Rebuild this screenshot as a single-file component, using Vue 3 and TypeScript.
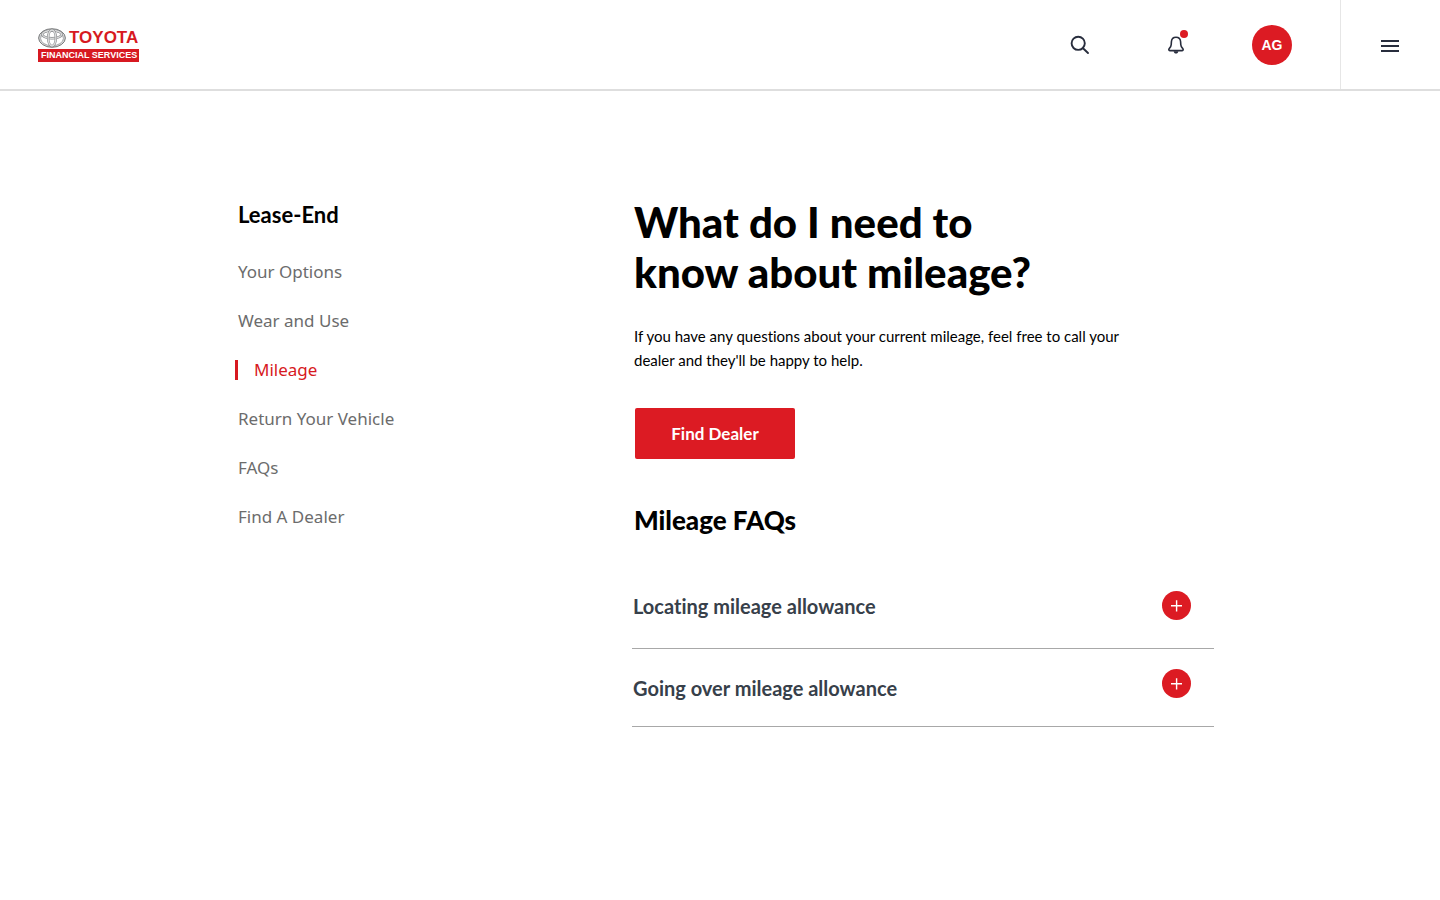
<script setup lang="ts">
interface NavItem {
  label: string
  active?: boolean
}

const navItems: NavItem[] = [
  { label: 'Your Options' },
  { label: 'Wear and Use' },
  { label: 'Mileage', active: true },
  { label: 'Return Your Vehicle' },
  { label: 'FAQs' },
  { label: 'Find A Dealer' },
]

const faqs: string[] = ['Locating mileage allowance', 'Going over mileage allowance']
</script>

<template>
  <div class="page">
    <header class="topbar">
      <a class="logo" href="#">
        <span class="logo-top">
          <svg class="emblem" viewBox="0 0 28 20" aria-hidden="true">
            <g fill="none">
              <ellipse cx="14" cy="10" rx="13.4" ry="9.3" fill="#d2d3d4" stroke="#6d6f71" stroke-width="0.9" />
              <ellipse cx="14" cy="10.3" rx="11.4" ry="7.4" fill="#fff" stroke="#8b8d8f" stroke-width="0.7" />
              <ellipse cx="14" cy="6.4" rx="9.6" ry="3.9" stroke="#85878a" stroke-width="2.4" />
              <ellipse cx="14" cy="6.4" rx="9.6" ry="3.9" stroke="#dcdddd" stroke-width="1.3" />
              <ellipse cx="14" cy="10" rx="3.9" ry="8" stroke="#85878a" stroke-width="2.4" />
              <ellipse cx="14" cy="10" rx="3.9" ry="8" stroke="#dcdddd" stroke-width="1.3" />
            </g>
          </svg>
          <span class="logo-name">TOYOTA</span>
        </span>
        <span class="logo-band">FINANCIAL SERVICES</span>
      </a>

      <div class="actions">
        <button class="cell" type="button" aria-label="Search">
          <svg width="20" height="20" viewBox="0 0 20 20" fill="none" stroke="#282d3d" stroke-width="1.9" stroke-linecap="round">
            <circle cx="8.2" cy="8.3" r="6.6" />
            <path d="M13 13.2 18 18" />
          </svg>
        </button>
        <button class="cell" type="button" aria-label="Notifications">
          <span class="bell">
            <svg width="18" height="18" viewBox="0 0 18 18" fill="none" stroke="#282d3d" stroke-width="1.6" stroke-linejoin="round">
              <path d="M9 1.3C6.2 1.3 4.6 3.2 4.4 5.8L4.2 8.8C4.1 10.3 3.5 11.3 2.4 12.4C1.3 13.5 1.8 14.6 2.8 14.6H15.2C16.2 14.6 16.7 13.5 15.6 12.4C14.5 11.3 13.9 10.3 13.8 8.8L13.6 5.8C13.4 3.2 11.8 1.3 9 1.3Z" />
              <path d="M6.6 15.2H11.4C11.1 16.8 10.2 17.6 9 17.6S6.9 16.8 6.6 15.2Z" fill="#282d3d" stroke="none" />
            </svg>
            <span class="dot"></span>
          </span>
        </button>
        <button class="cell" type="button" aria-label="Account">
          <span class="avatar">AG</span>
        </button>
        <button class="menu" type="button" aria-label="Menu">
          <svg width="18" height="14" viewBox="0 0 18 14" stroke="#282d3d" stroke-width="1.8">
            <path d="M0 2H18M0 7H18M0 12H18" />
          </svg>
        </button>
      </div>
    </header>

    <div class="body">
      <aside class="sidebar">
        <h2 class="side-title">Lease-End</h2>
        <nav aria-label="Lease-End">
          <ul class="nav">
            <li v-for="item in navItems" :key="item.label">
              <a href="#" :class="{ active: item.active }" :aria-current="item.active ? 'page' : undefined">{{ item.label }}</a>
            </li>
          </ul>
        </nav>
      </aside>

      <main class="content">
        <section class="intro">
          <h1>What do I need to<br />know about mileage?</h1>
          <p>If you have any questions about your current mileage, feel free to call your dealer and they'll be happy to help.</p>
          <button class="cta" type="button">Find Dealer</button>
          <h2>Mileage FAQs</h2>
        </section>
        <ul class="faqs">
          <li v-for="faq in faqs" :key="faq" class="faq">
            <h3>{{ faq }}</h3>
            <button class="expand" type="button" :aria-label="'Expand ' + faq">
              <svg width="29" height="29" viewBox="0 0 29 29" fill="none" stroke="#fff" stroke-width="1.4">
                <path d="M9 14.8H20M14.6 9.2V20.4" />
              </svg>
            </button>
          </li>
        </ul>
      </main>
    </div>
  </div>
</template>

<style>
body {
  margin: 0;
  background: #fff;
}
</style>

<style scoped>
.page {
  min-height: 100vh;
  color: #000;
  font-family: Lato, "Noto Sans", sans-serif;
  font-variant-ligatures: none;
}
h1, h2, h3, p, ul {
  margin: 0;
  padding: 0;
}
ul {
  list-style: none;
}
a {
  text-decoration: none;
}
button {
  border: 0;
  padding: 0;
  background: none;
  font-family: inherit;
  cursor: pointer;
}
.topbar {
  display: flex;
  justify-content: space-between;
  height: 89px;
  border-bottom: 2px solid #dedede;
}
.logo {
  display: flex;
  flex-direction: column;
  align-self: flex-start;
  margin: 27px 0 0 38px;
  font-family: "Liberation Sans", Arial, sans-serif;
  font-weight: 700;
}
.logo-top {
  display: flex;
  align-items: center;
  gap: 3px;
  height: 22px;
}
.emblem {
  width: 28px;
  height: 20px;
}
.logo-name {
  color: #d71921;
  font-size: 17px;
  line-height: 22px;
}
.logo-band {
  padding: 0 2px 0 3px;
  background: #d71921;
  color: #fff;
  font-size: 9px;
  line-height: 13px;
  white-space: nowrap;
}
.actions {
  display: flex;
}
.cell {
  display: flex;
  align-items: center;
  justify-content: center;
  width: 96px;
  padding-top: 1px;
}
.bell {
  position: relative;
  display: flex;
}
.dot {
  position: absolute;
  top: -6px;
  right: -3px;
  width: 8px;
  height: 8px;
  border-radius: 50%;
  background: #dc1b23;
}
.avatar {
  width: 40px;
  border-radius: 50%;
  background: #dc1b23;
  color: #fff;
  font-family: "Liberation Sans", Arial, sans-serif;
  font-size: 14px;
  font-weight: 700;
  line-height: 40px;
}
.menu {
  display: flex;
  align-items: center;
  justify-content: center;
  width: 100px;
  margin-left: 20px;
  padding: 2px 2px 0 0;
  border-left: 1px solid #e6e6e6;
}
.body {
  display: grid;
  grid-template-columns: minmax(0, 394fr) minmax(0, 582fr);
  padding: 106px 226px 60px 238px;
}
.side-title {
  padding-top: 3px;
  font-size: 22px;
  font-weight: 700;
  line-height: 30px;
}
.nav {
  display: grid;
  gap: 29px;
  padding-top: 32px;
}
.nav a {
  display: block;
  color: #6c6c6c;
  font-family: "Noto Sans", sans-serif;
  font-size: 17px;
  line-height: 20px;
}
.nav a.active {
  margin-left: -3px;
  padding-left: 16px;
  border-left: 3px solid #d71921;
  color: #d71921;
}
.intro {
  padding-left: 2px;
}
h1 {
  font-size: 42px;
  font-weight: 900;
  line-height: 50px;
}
.intro p {
  max-width: 500px;
  padding-top: 27px;
  font-size: 15px;
  line-height: 24px;
}
.cta {
  display: block;
  width: 160px;
  margin: 36px 0 0 1px;
  border-radius: 2px;
  background: #dc1b23;
  color: #fff;
  font-size: 17px;
  font-weight: 700;
  line-height: 51px;
}
.intro h2 {
  padding-top: 46px;
  font-size: 26px;
  font-weight: 900;
  line-height: 30px;
}
.faqs {
  padding-top: 28px;
}
.faq {
  display: flex;
  align-items: center;
  justify-content: space-between;
  height: 77px;
  padding: 0 23px 0 1px;
  border-bottom: 1px solid #a8a8a8;
}
.faq:first-child {
  height: 85px;
}
.faq h3 {
  color: #37404a;
  font-size: 20px;
  font-weight: 700;
  line-height: 24px;
}
.expand {
  display: flex;
  align-self: flex-end;
  margin-bottom: 28px;
  border-radius: 50%;
  background: #dc1b23;
}
</style>
